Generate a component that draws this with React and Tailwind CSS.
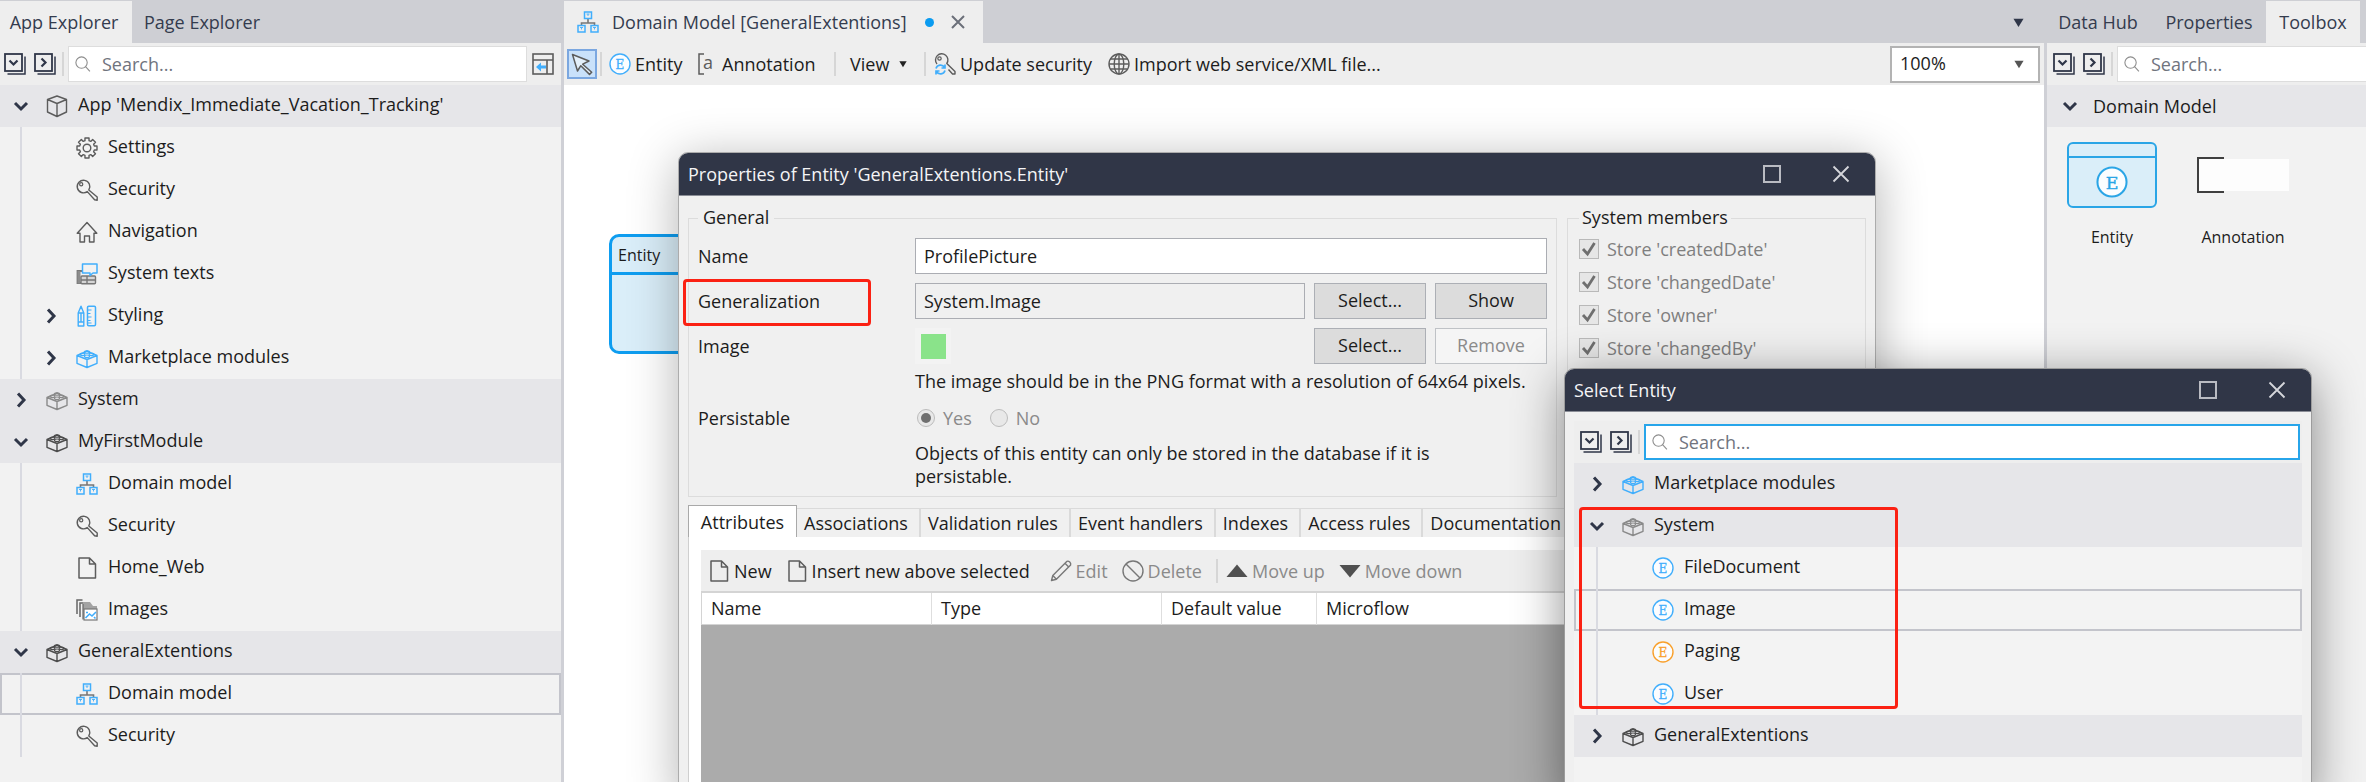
import React from "react";

const DARK = "#2f3648";
const GREY = "#5c5c5c";
const BLUE = "#41aefc";

function Svg({ size = 22, children, className = "" }) {
  return (
    <svg
      width={size}
      height={size}
      viewBox="0 0 22 22"
      fill="none"
      aria-hidden="true"
      className={`shrink-0 overflow-visible ${className}`}
    >
      {children}
    </svg>
  );
}

/* ---------- icons ---------- */

const ChevronDown = () => (
  <Svg>
    <path d="M5 8l6 6 6-6" stroke={DARK} strokeWidth="3" />
  </Svg>
);

const ChevronRight = () => (
  <Svg>
    <path d="M8 4.5l6 6.5-6 6.5" stroke={DARK} strokeWidth="3" />
  </Svg>
);

const StackIcon = ({ open }) => (
  <Svg>
    <rect x="1" y="1" width="17" height="17" stroke={DARK} strokeWidth="1.8" />
    <path d="M21 3.5V21H3.5" stroke={DARK} strokeWidth="1.5" />
    {open ? (
      <path d="M5.5 7.5l4 4 4-4" stroke={DARK} strokeWidth="2.2" />
    ) : (
      <path d="M7.5 5.5l4 4-4 4" stroke={DARK} strokeWidth="2.2" />
    )}
  </Svg>
);

const SearchIcon = () => (
  <Svg size={16}>
    <circle cx="9" cy="9" r="7.8" stroke="#8d8d8d" strokeWidth="1.5" />
    <path d="M14.5 14.5l6 6.5" stroke="#8d8d8d" strokeWidth="1.5" />
  </Svg>
);

const DockIcon = () => (
  <Svg>
    <rect x="1" y="1" width="20" height="20" stroke={GREY} strokeWidth="1.6" />
    <path d="M1 7h20M15 7v14" stroke={GREY} strokeWidth="1.6" />
    <path d="M4 14l5-4.5v3h5v3H9v3z" fill={BLUE} />
  </Svg>
);

const CubeIcon = () => (
  <Svg>
    <path
      d="M11 1l9.5 3.5v12.5L11 21.5 1.5 17V4.5zM1.5 4.5L11 8.500l9.500-4M11 8.500v13"
      stroke={GREY}
      strokeWidth="1.4"
      strokeLinejoin="round"
    />
  </Svg>
);

const gearPath = (() => {
  const teeth = 8;
  const pts = [];
  for (let i = 0; i < teeth; i += 1) {
    const a = (i * 2 * Math.PI) / teeth;
    [
      [-0.27, 7.6],
      [-0.2, 10.2],
      [0.2, 10.2],
      [0.27, 7.6],
    ].forEach(([d, r]) => {
      pts.push(`${(11 + r * Math.sin(a + d)).toFixed(2)} ${(11 - r * Math.cos(a + d)).toFixed(2)}`);
    });
  }
  return `M${pts.join("L")}Z`;
})();

const GearIcon = () => (
  <Svg>
    <path d={gearPath} stroke={GREY} strokeWidth="1.4" strokeLinejoin="round" />
    <circle cx="11" cy="11" r="3.8" stroke={GREY} strokeWidth="1.4" />
  </Svg>
);

const KeyIcon = () => (
  <Svg>
    <path
      d="M11.3 12.6L18.6 20.8l2.6 0.4V18L12.8 11A6.300 6.300 0 1 0 11.3 12.600z"
      stroke={GREY}
      strokeWidth="1.4"
      strokeLinejoin="round"
    />
    <circle cx="5.200" cy="5.200" r="1.600" stroke={GREY} strokeWidth="1.2" />
  </Svg>
);

const KeySyncIcon = () => (
  <Svg>
    <path
      d="M3 11A6.200 6.200 0 1 1 12.800 10.500L21 18.500V21H18.500L14.500 16.500"
      stroke={GREY}
      strokeWidth="1.4"
      strokeLinejoin="round"
    />
    <circle cx="5.500" cy="5.500" r="1.700" stroke={GREY} strokeWidth="1.2" />
    <path
      d="M2 15.500a4.600 4.600 0 0 1 8.500-1M11 11.500v3.500H7.500M11 17.500a4.600 4.600 0 0 1-8.500 1M2 21.500V18h3.500"
      stroke={BLUE}
      strokeWidth="1.7"
    />
  </Svg>
);

const HomeIcon = () => (
  <Svg>
    <path
      d="M1.200 12.200L11 1.500l9.800 10.700H18V21h-4.500v-6h-5v6H4v-8.800z"
      stroke={GREY}
      strokeWidth="1.4"
      strokeLinejoin="round"
    />
  </Svg>
);

const SystemTextsIcon = () => (
  <Svg>
    <path d="M6 8H1.500v12H19" stroke="#777" strokeWidth="1.8" />
    <path d="M1.500 8h3v12.500h-3z" fill="#8c8c8c" />
    <rect x="5" y="13" width="14.500" height="7.800" rx="1" stroke="#777" strokeWidth="1.4" fill="#d5d5d5" />
    <path d="M5 17h14.500M11 13v8" stroke="#777" strokeWidth="1.4" />
    <path
      d="M6.500 1h14.500v9h-4l-3 2.500V10H6.500z"
      stroke={BLUE}
      strokeWidth="1.5"
      fill="#f2f2f2"
      strokeLinejoin="round"
    />
  </Svg>
);

const StylingIcon = () => (
  <Svg>
    <path
      d="M2.200 8L5 1.200 7.800 8v13H2.200zM2.200 8h5.600M2.200 17h5.600M5 8v9"
      stroke={BLUE}
      strokeWidth="1.4"
      strokeLinejoin="round"
    />
    <rect x="11.500" y="1.200" width="8" height="19.600" rx="1.200" stroke={BLUE} strokeWidth="1.5" />
    <path d="M11.500 5h4M11.500 8.500h3M11.500 12h4M11.500 15.500h3M15.500 18H12" stroke={BLUE} strokeWidth="1.2" />
  </Svg>
);

const BrickIcon = ({ color = "#4d4d4d" }) => (
  <Svg>
    <path
      d="M1 8.500L7 6l4-2 4 2 6 2.500v7.800L11 20.500 1 16.300zM1 8.500l10 4 10-4M11 12.500v8"
      stroke={color}
      strokeWidth="1.4"
      strokeLinejoin="round"
    />
    <g stroke={color} strokeWidth="1.1">
      <ellipse cx="11" cy="5" rx="2.600" ry="1.300" />
      <ellipse cx="6.500" cy="7.300" rx="2.400" ry="1.300" />
      <ellipse cx="15.500" cy="7.300" rx="2.400" ry="1.300" />
      <ellipse cx="11" cy="9.300" rx="2.600" ry="1.300" />
    </g>
  </Svg>
);

const DomainIcon = () => (
  <Svg>
    <path d="M11 8v4M4.500 14.500V12h13v2.500" stroke="#777" strokeWidth="1.6" />
    <g stroke={BLUE} strokeWidth="1.5">
      <rect x="7.500" y="1" width="7" height="6.500" />
      <rect x="1" y="14.500" width="7" height="6.500" />
      <rect x="14" y="14.500" width="7" height="6.500" />
    </g>
    <path
      d="M9.500 3h3M3 16.500h3M16 16.500h3M11 3v2M4.500 16.500v2M17.500 16.500v2"
      stroke={BLUE}
      strokeWidth="0.9"
    />
  </Svg>
);

const PageIcon = () => (
  <Svg>
    <path d="M3 1h10.500L19.500 7v14H3zM13.500 1v6h6" stroke={GREY} strokeWidth="1.5" strokeLinejoin="round" />
  </Svg>
);

const ImagesIcon = () => (
  <Svg>
    <path d="M1 15V1h5.500M4 18V4h3" stroke="#666" strokeWidth="1.5" />
    <path d="M7 20V3h7l3 4h4v5H9v8z" fill="#a3a3a3" />
    <path d="M7 20.500V5" stroke="#666" strokeWidth="1.2" />
    <rect x="8" y="10" width="13" height="11" fill="#fff" stroke="#777" strokeWidth="1.2" />
    <path d="M9.500 19l4-4 2.500 2 4-4M10 13.500h2M18 18l1.500 1.500" stroke={BLUE} strokeWidth="1.6" />
  </Svg>
);

const EntityIcon = ({ color = BLUE, size = 22 }) => (
  <Svg size={size}>
    <circle cx="11" cy="11" r="10" stroke={color} strokeWidth="1.4" fill="#fbfdff" />
    <text
      x="11"
      y="15.500"
      textAnchor="middle"
      fontFamily="'DejaVu Serif', serif"
      fontSize="12"
      fill={color}
      stroke={color}
      strokeWidth="0.3"
    >
      E
    </text>
  </Svg>
);

const CursorIcon = () => (
  <Svg>
    <path
      d="M1.500 1.500L18 8l-6.300 3.200 9 8-2.200 2.200-8.700-8.700L6.500 18z"
      stroke={GREY}
      strokeWidth="1.5"
      strokeLinejoin="round"
      fill="#e3effa"
    />
  </Svg>
);

const AnnotationIcon = () => (
  <Svg>
    <path d="M8 1H3v20h5" stroke={GREY} strokeWidth="1.5" />
    <text x="7" y="16" fontFamily="'Open Sans', sans-serif" fontSize="18" fill={GREY}>
      a
    </text>
  </Svg>
);

const GlobeIcon = () => (
  <Svg>
    <g stroke={GREY} strokeWidth="1.4">
      <circle cx="11" cy="11" r="10" />
      <ellipse cx="11" cy="11" rx="4.800" ry="10" />
      <path d="M11 1v20M1 11h20M2.500 6h17M2.500 16h17" />
    </g>
  </Svg>
);

const PencilIcon = () => (
  <Svg>
    <path
      d="M1.500 20.500l1.300-5L17 1.300c1.800-.8 4.300 1.700 3.600 3.600L6.400 19.200zM15 3.300l3.700 3.600M2.800 15.500l3.600 3.700"
      stroke="#777"
      strokeWidth="1.4"
      strokeLinejoin="round"
    />
  </Svg>
);

const ForbiddenIcon = () => (
  <Svg>
    <circle cx="11" cy="11" r="10" stroke="#777" strokeWidth="1.4" />
    <path d="M4 4l14 14" stroke="#777" strokeWidth="1.4" />
  </Svg>
);

const TriangleIcon = ({ down }) => (
  <Svg>
    <path d={down ? "M0.500 5h21L11 17.500z" : "M0.500 17h21L11 4.500z"} fill="#505050" />
  </Svg>
);

const Caret = ({ size = 12, color = DARK }) => (
  <svg width={size} height={size} viewBox="0 0 12 12" aria-hidden="true" className="shrink-0">
    <path d="M0.500 2h11L6 11z" fill={color} />
  </svg>
);

/* ---------- shared parts ---------- */

const Divider = () => <span className="h-6 w-0.5 shrink-0 bg-[#d6d6d6]" />;

function SearchBar({ id, focused, openEnd, children }) {
  return (
    <div className="flex h-[42px] items-center bg-[#eeeeee]">
      <div className="flex items-center gap-2 pr-1.5">
        <button type="button" aria-label="Collapse all">
          <StackIcon open />
        </button>
        <button type="button" aria-label="Expand all">
          <StackIcon />
        </button>
      </div>
      <Divider />
      <label
        htmlFor={id}
        className={`ml-1 flex h-9 flex-1 items-center gap-[11px] bg-white pl-1.5 ${
          focused
            ? "border-2 border-[#27a5ea]"
            : openEnd
              ? "border-y border-l border-[#dddddd]"
              : "border border-[#dddddd]"
        }`}
      >
        <SearchIcon />
        <input
          id={id}
          type="text"
          aria-label="Search"
          placeholder="Search..."
          className="w-full min-w-0 bg-transparent outline-none placeholder:text-[#70747e]"
        />
      </label>
      {children}
    </div>
  );
}

function TreeHeader({ icon, label, open, inset }) {
  return (
    <div className={`flex h-[42px] items-center bg-[#e6e6e9] ${inset ? "pl-3" : "pl-2.5"}`}>
      {open ? <ChevronDown /> : <ChevronRight />}
      <span className="ml-3.5 mr-2.5 flex">{icon}</span>
      <span className="pb-1">{label}</span>
    </div>
  );
}

function TreeItem({ icon, label, expandable, selected, inset }) {
  return (
    <div
      className={`flex h-[42px] items-center ${inset ? "pl-[22px]" : "pl-5"} ${
        selected ? "inset-ring-2 inset-ring-[#c3c4cb]" : ""
      }`}
    >
      <span className="mr-[18px] w-0.5 self-stretch bg-[#d9dae1]" />
      <span className="w-[22px]">{expandable && <ChevronRight />}</span>
      <span className="ml-3.5 mr-2.5 flex">{icon}</span>
      <span className="pb-1">{label}</span>
    </div>
  );
}

function ToolButton({ icon, children, disabled, className = "" }) {
  return (
    <button
      type="button"
      disabled={disabled}
      className={`flex items-center gap-1 whitespace-nowrap disabled:text-[#8a8a8a] ${className}`}
    >
      {icon}
      {children}
    </button>
  );
}

function TitleBar({ title }) {
  return (
    <div className="flex h-[43px] shrink-0 items-stretch rounded-t-[9px] border-b border-[#8a8d96] bg-[#303647] pl-[9px] text-[#f4f4f6]">
      <h2 className="flex-1 self-center">{title}</h2>
      <button type="button" aria-label="Maximize" className="flex w-[69px] items-center justify-center">
        <svg width="18" height="18" viewBox="0 0 18 18" fill="none" aria-hidden="true">
          <rect x="1" y="1" width="16" height="16" stroke="#b9bbc2" strokeWidth="2" />
        </svg>
      </button>
      <button type="button" aria-label="Close" className="flex w-[69px] items-center justify-center">
        <svg width="18" height="18" viewBox="0 0 18 18" fill="none" aria-hidden="true">
          <path d="M1.500 1.500l15 15M16.500 1.500l-15 15" stroke="#d5d6db" strokeWidth="1.8" />
        </svg>
      </button>
    </div>
  );
}

function DialogButton({ children, disabled }) {
  return (
    <button
      type="button"
      disabled={disabled}
      className="h-9 w-28 shrink-0 border border-[#acafb5] bg-[#dcdcdc] pb-0.5 disabled:border-[#bfc2c6] disabled:bg-[#f5f5f5] disabled:text-[#8a8a8a]"
    >
      {children}
    </button>
  );
}

function Radio({ label, name, checked }) {
  return (
    <label className="flex items-center gap-2 text-[#8a8a8a]">
      <input
        type="radio"
        name={name}
        defaultChecked={checked}
        disabled
        className="grid size-[18px] appearance-none place-items-center rounded-full border border-[#bcbcbc] bg-[#e8e8e8] before:size-2.5 before:rounded-full checked:before:bg-[#6f6f6f]"
      />
      {label}
    </label>
  );
}

function Check({ label }) {
  return (
    <label className="flex h-[33px] items-center gap-2 text-[#7f7f7f]">
      <span className="grid size-5 place-items-center">
        <input
          type="checkbox"
          defaultChecked
          disabled
          className="size-5 appearance-none border border-[#b9b9b9] bg-[#e6e6e6] [grid-area:1/1]"
        />
        <svg width="20" height="20" viewBox="0 0 20 20" fill="none" aria-hidden="true" className="[grid-area:1/1]">
          <path d="M4 10l4.500 5L15.500 4" stroke="#6f6f6f" strokeWidth="2.8" />
        </svg>
      </span>
      {label}
    </label>
  );
}

/* ---------- panels ---------- */

function ExplorerPanel() {
  return (
    <aside className="flex w-[564px] shrink-0 flex-col">
      <nav className="flex h-[43px] shrink-0 bg-[#cecfd4] pt-px text-[#343c4e]">
        <button type="button" className="w-[132px] bg-[#eeeeee] pr-1">
          App Explorer
        </button>
        <button type="button" className="px-3">
          Page Explorer
        </button>
      </nav>
      <div className="flex-1 border-r-[3px] border-[#cfd0d6] bg-[#f2f2f2]">
        <div className="bg-[#eeeeee] pl-1 pr-[7px]">
          <SearchBar id="explorer-search">
            <button type="button" aria-label="Dock panel" className="ml-[5px]">
              <DockIcon />
            </button>
          </SearchBar>
        </div>
        <TreeHeader open icon={<CubeIcon />} label="App 'Mendix_Immediate_Vacation_Tracking'" />
        <TreeItem icon={<GearIcon />} label="Settings" />
        <TreeItem icon={<KeyIcon />} label="Security" />
        <TreeItem icon={<HomeIcon />} label="Navigation" />
        <TreeItem icon={<SystemTextsIcon />} label="System texts" />
        <TreeItem expandable icon={<StylingIcon />} label="Styling" />
        <TreeItem expandable icon={<BrickIcon color={BLUE} />} label="Marketplace modules" />
        <TreeHeader icon={<BrickIcon color="#8a8a8a" />} label="System" />
        <TreeHeader open icon={<BrickIcon />} label="MyFirstModule" />
        <TreeItem icon={<DomainIcon />} label="Domain model" />
        <TreeItem icon={<KeyIcon />} label="Security" />
        <TreeItem icon={<PageIcon />} label="Home_Web" />
        <TreeItem icon={<ImagesIcon />} label="Images" />
        <TreeHeader open icon={<BrickIcon />} label="GeneralExtentions" />
        <TreeItem selected icon={<DomainIcon />} label="Domain model" />
        <TreeItem icon={<KeyIcon />} label="Security" />
      </div>
    </aside>
  );
}

function EditorPanel() {
  return (
    <main className="flex min-w-0 flex-1 flex-col">
      <div className="flex h-[43px] shrink-0 items-stretch justify-between bg-[#cecfd4] pt-px text-[#343c4e]">
        <div className="flex w-[419px] items-center bg-[#eeeeee] pl-[13px]">
          <DomainIcon />
          <span className="ml-[13px] w-[302px]">Domain Model [GeneralExtentions]</span>
          <span className="ml-[11px] size-[9px] rounded-full bg-[#0a9bf0]" />
          <button type="button" aria-label="Close tab" className="ml-[17px]">
            <svg width="14" height="14" viewBox="0 0 14 14" fill="none" aria-hidden="true">
              <path d="M1 1l12 12M13 1L1 13" stroke="#6b6f79" strokeWidth="2" />
            </svg>
          </button>
        </div>
        <button type="button" aria-label="Open documents" className="mr-5">
          <Caret size={11} />
        </button>
      </div>
      <div className="flex h-[42px] shrink-0 items-center bg-[#eeeeee] pl-[3px] pr-1">
        <button
          type="button"
          aria-label="Pointer"
          className="grid size-[30px] place-items-center border-2 border-[#7ba7e0] bg-[#c9e1fa]"
        >
          <CursorIcon />
        </button>
        <span className="ml-[3px] mr-[7px] flex">
          <Divider />
        </span>
        <ToolButton icon={<EntityIcon />} className="w-[87px]">
          Entity
        </ToolButton>
        <ToolButton icon={<AnnotationIcon />} className="w-[138px]">
          Annotation
        </ToolButton>
        <Divider />
        <button type="button" className="flex w-[88px] items-center gap-2.5 pl-3.5">
          View
          <Caret size={8} color="#222" />
        </button>
        <Divider />
        <ToolButton icon={<KeySyncIcon />} className="ml-2 w-[174px]">
          Update security
        </ToolButton>
        <ToolButton icon={<GlobeIcon />}>Import web service/XML file...</ToolButton>
        <div className="ml-auto grid w-[150px] items-center">
          <select
            aria-label="Zoom"
            className="h-[37px] w-full appearance-none border-2 border-[#b3b3b3] bg-white pb-0.5 pl-2 [grid-area:1/1]"
          >
            <option>100%</option>
          </select>
          <span className="pointer-events-none mr-4 justify-self-end [grid-area:1/1]">
            <Caret size={10} color="#555" />
          </span>
        </div>
      </div>
      <div className="relative flex-1 bg-white">
        <div className="absolute left-[45px] top-[149px] h-[120px] w-[180px] rounded-[10px] border-[3px] border-[#0e9df0] bg-[#daeef9]">
          <div className="h-[38px] border-b-[3px] border-[#0e9df0] pl-1.5 pt-1.5 text-base">Entity</div>
        </div>
      </div>
    </main>
  );
}

function ToolboxPanel() {
  return (
    <aside className="flex w-[322px] shrink-0 flex-col">
      <nav className="flex h-[43px] shrink-0 bg-[#cecfd4] pt-px text-[#343c4e]">
        <button type="button" className="w-[108px]">
          Data Hub
        </button>
        <button type="button" className="w-[114px]">
          Properties
        </button>
        <button type="button" className="w-[94px] bg-[#eeeeee]">
          Toolbox
        </button>
      </nav>
      <div className="flex-1 border-l-[3px] border-[#cfd0d6] bg-[#f2f2f2]">
        <div className="bg-[#eeeeee] pl-1.5">
          <SearchBar id="toolbox-search" openEnd />
        </div>
        <div className="flex h-[42px] items-center gap-3 bg-[#e6e6e9] pl-3">
          <ChevronDown />
          <span className="font-medium">Domain Model</span>
        </div>
        <div className="flex gap-10 pl-5 pt-[15px] text-base">
          <button type="button" className="flex flex-col items-center gap-[17px]">
            <span className="flex h-[66px] w-[90px] flex-col rounded-md border-2 border-[#2aa5e6] bg-[#daeef9]">
              <span className="h-3.5 border-b-2 border-[#2aa5e6]" />
              <span className="flex flex-1 items-center justify-center">
                <EntityIcon size={32} color="#2aa5e6" />
              </span>
            </span>
            Entity
          </button>
          <button type="button" className="flex flex-col items-center gap-[17px]">
            <span className="flex h-[66px] w-[92px] items-center">
              <svg width="92" height="36" viewBox="0 0 92 36" fill="none" aria-hidden="true">
                <path d="M2 2h90v32H2z" fill="#fdfdfd" />
                <path d="M27 1H1v34h26" stroke="#3f3f3f" strokeWidth="2" />
              </svg>
            </span>
            Annotation
          </button>
        </div>
      </div>
    </aside>
  );
}

/* ---------- dialogs ---------- */

const tabs = ["Associations", "Validation rules", "Event handlers", "Indexes", "Access rules", "Documentation"];

function PropertiesDialog() {
  return (
    <section
      role="dialog"
      aria-label="Properties of Entity"
      className="absolute -bottom-5 left-[678px] top-[152px] flex w-[1198px] flex-col rounded-t-[10px] border border-[#acacac] bg-[#f0f0f0] shadow-[0_8px_50px_rgba(0,0,0,0.3)]"
    >
      <TitleBar title="Properties of Entity 'GeneralExtentions.Entity'" />
      <div className="flex min-h-0 flex-1 flex-col px-[9px] pt-2.5">
        <div className="flex gap-2.5">
          <fieldset className="min-w-0 flex-1 border border-[#dcdcdc] px-[9px]">
            <legend className="px-[5px] pb-0.5 leading-[22px]">General</legend>
            <div className="flex flex-col gap-[9px] pt-2">
              <div className="flex items-center">
                <label htmlFor="entity-name" className="w-[217px]">
                  Name
                </label>
                <input
                  id="entity-name"
                  type="text"
                  defaultValue="ProfilePicture"
                  className="h-9 min-w-0 flex-1 border border-[#abadb3] bg-white px-2"
                />
              </div>
              <div className="flex items-center gap-[9px]">
                <div className="flex flex-1 items-center">
                  <label htmlFor="entity-generalization" className="w-[217px]">
                    Generalization
                  </label>
                  <input
                    id="entity-generalization"
                    type="text"
                    readOnly
                    defaultValue="System.Image"
                    className="h-9 min-w-0 flex-1 border border-[#abadb3] bg-[#f0f0f0] px-2"
                  />
                </div>
                <DialogButton>Select...</DialogButton>
                <DialogButton>Show</DialogButton>
              </div>
              <div className="flex items-center gap-[9px]">
                <div className="flex flex-1 items-center">
                  <span className="w-[217px]">Image</span>
                  <span className="grid size-9 place-items-center bg-[#f3f3f3]">
                    <span className="size-[25px] bg-[#8ae38a]" />
                  </span>
                </div>
                <DialogButton>Select...</DialogButton>
                <DialogButton disabled>Remove</DialogButton>
              </div>
            </div>
            <p className="mt-1.5 pl-[217px] leading-[23px]">
              The image should be in the PNG format with a resolution of 64x64 pixels.
            </p>
            <div className="mt-3 flex h-[26px] items-center">
              <span className="w-[217px]">Persistable</span>
              <div className="flex gap-[18px] pl-0.5">
                <Radio name="persistable" label="Yes" checked />
                <Radio name="persistable" label="No" />
              </div>
            </div>
            <p className="mb-2 mt-[11px] pl-[217px] pr-16 leading-[23px]">
              Objects of this entity can only be stored in the database if it is persistable.
            </p>
          </fieldset>
          <fieldset className="w-[299px] border border-[#dcdcdc] px-[11px]">
            <legend className="px-[3px] pb-0.5 leading-[22px]">System members</legend>
            <div className="pt-0.5">
              <Check label="Store 'createdDate'" />
              <Check label="Store 'changedDate'" />
              <Check label="Store 'owner'" />
              <Check label="Store 'changedBy'" />
            </div>
          </fieldset>
        </div>

        <div role="tablist" className="mt-2 flex h-8 shrink-0 items-end">
          <button
            type="button"
            role="tab"
            aria-selected="true"
            className="h-8 w-[109px] border border-b-0 border-[#a9a9a9] bg-white"
          >
            Attributes
          </button>
          {tabs.map((t) => (
            <button
              key={t}
              type="button"
              role="tab"
              aria-selected="false"
              className="h-[29px] whitespace-nowrap border-r-2 border-t border-[#dadada] bg-[#f0f0f0] pl-[7px] pr-[11px]"
            >
              {t}
            </button>
          ))}
        </div>
        <div className="flex min-h-0 flex-1 flex-col border-l border-[#cfcfcf] bg-white px-3 pt-[13px]">
          <div className="flex h-[41px] shrink-0 items-center gap-3.5 bg-[#eeeeee] pl-[7px]">
            <ToolButton icon={<PageIcon />}>New</ToolButton>
            <ToolButton icon={<PageIcon />} className="w-[250px]">
              Insert new above selected
            </ToolButton>
            <ToolButton disabled icon={<PencilIcon />}>
              Edit
            </ToolButton>
            <ToolButton disabled icon={<ForbiddenIcon />}>
              Delete
            </ToolButton>
            <div className="flex gap-2">
              <Divider />
              <ToolButton disabled icon={<TriangleIcon />}>
                Move up
              </ToolButton>
            </div>
            <ToolButton disabled icon={<TriangleIcon down />}>
              Move down
            </ToolButton>
          </div>
          <table className="w-full table-fixed border-l border-t-2 border-[#d4d4d4] text-left">
            <thead>
              <tr className="h-8 border-b border-[#d4d4d4]">
                <th className="w-[230px] border-r border-[#dedede] px-[9px] font-normal">Name</th>
                <th className="w-[230px] border-r border-[#dedede] px-[9px] font-normal">Type</th>
                <th className="w-[155px] border-r border-[#dedede] px-[9px] font-normal">Default value</th>
                <th className="px-[9px] font-normal">Microflow</th>
              </tr>
            </thead>
          </table>
          <div className="flex-1 bg-[#ababab]" />
        </div>
      </div>
      <span className="pointer-events-none absolute left-1 top-[126px] h-[47px] w-[188px] rounded-sm border-[3px] border-[#fb2113]" />
    </section>
  );
}

function SelectEntityDialog() {
  return (
    <section
      role="dialog"
      aria-label="Select Entity"
      className="absolute -bottom-5 left-[1564px] top-[368px] flex w-[748px] flex-col rounded-t-[10px] border border-[#9c9c9c] bg-[#f0f0f0] shadow-[0_10px_50px_rgba(0,0,0,0.45)]"
    >
      <TitleBar title="Select Entity" />
      <div className="flex flex-1 flex-col px-[9px] pt-[9px]">
        <div className="bg-[#eeeeee] pl-1.5 pr-0.5">
          <SearchBar id="entity-search" focused />
        </div>
        <div className="flex-1 bg-[#f3f3f3]">
          <TreeHeader inset icon={<BrickIcon color={BLUE} />} label="Marketplace modules" />
          <TreeHeader inset open icon={<BrickIcon color="#8a8a8a" />} label="System" />
          <TreeItem inset icon={<EntityIcon />} label="FileDocument" />
          <TreeItem inset selected icon={<EntityIcon />} label="Image" />
          <TreeItem inset icon={<EntityIcon color="#f9a02c" />} label="Paging" />
          <TreeItem inset icon={<EntityIcon />} label="User" />
          <TreeHeader inset icon={<BrickIcon />} label="GeneralExtentions" />
        </div>
      </div>
      <span className="pointer-events-none absolute left-3.5 top-[138px] h-[202px] w-[319px] rounded-sm border-[3px] border-[#fb2113]" />
    </section>
  );
}

export default function App() {
  return (
    <div className="relative flex h-screen overflow-hidden bg-white font-['Open_Sans','Noto_Sans',sans-serif] text-lg leading-6 text-[#1c1c1c]">
      <ExplorerPanel />
      <EditorPanel />
      <ToolboxPanel />
      <PropertiesDialog />
      <SelectEntityDialog />
    </div>
  );
}
